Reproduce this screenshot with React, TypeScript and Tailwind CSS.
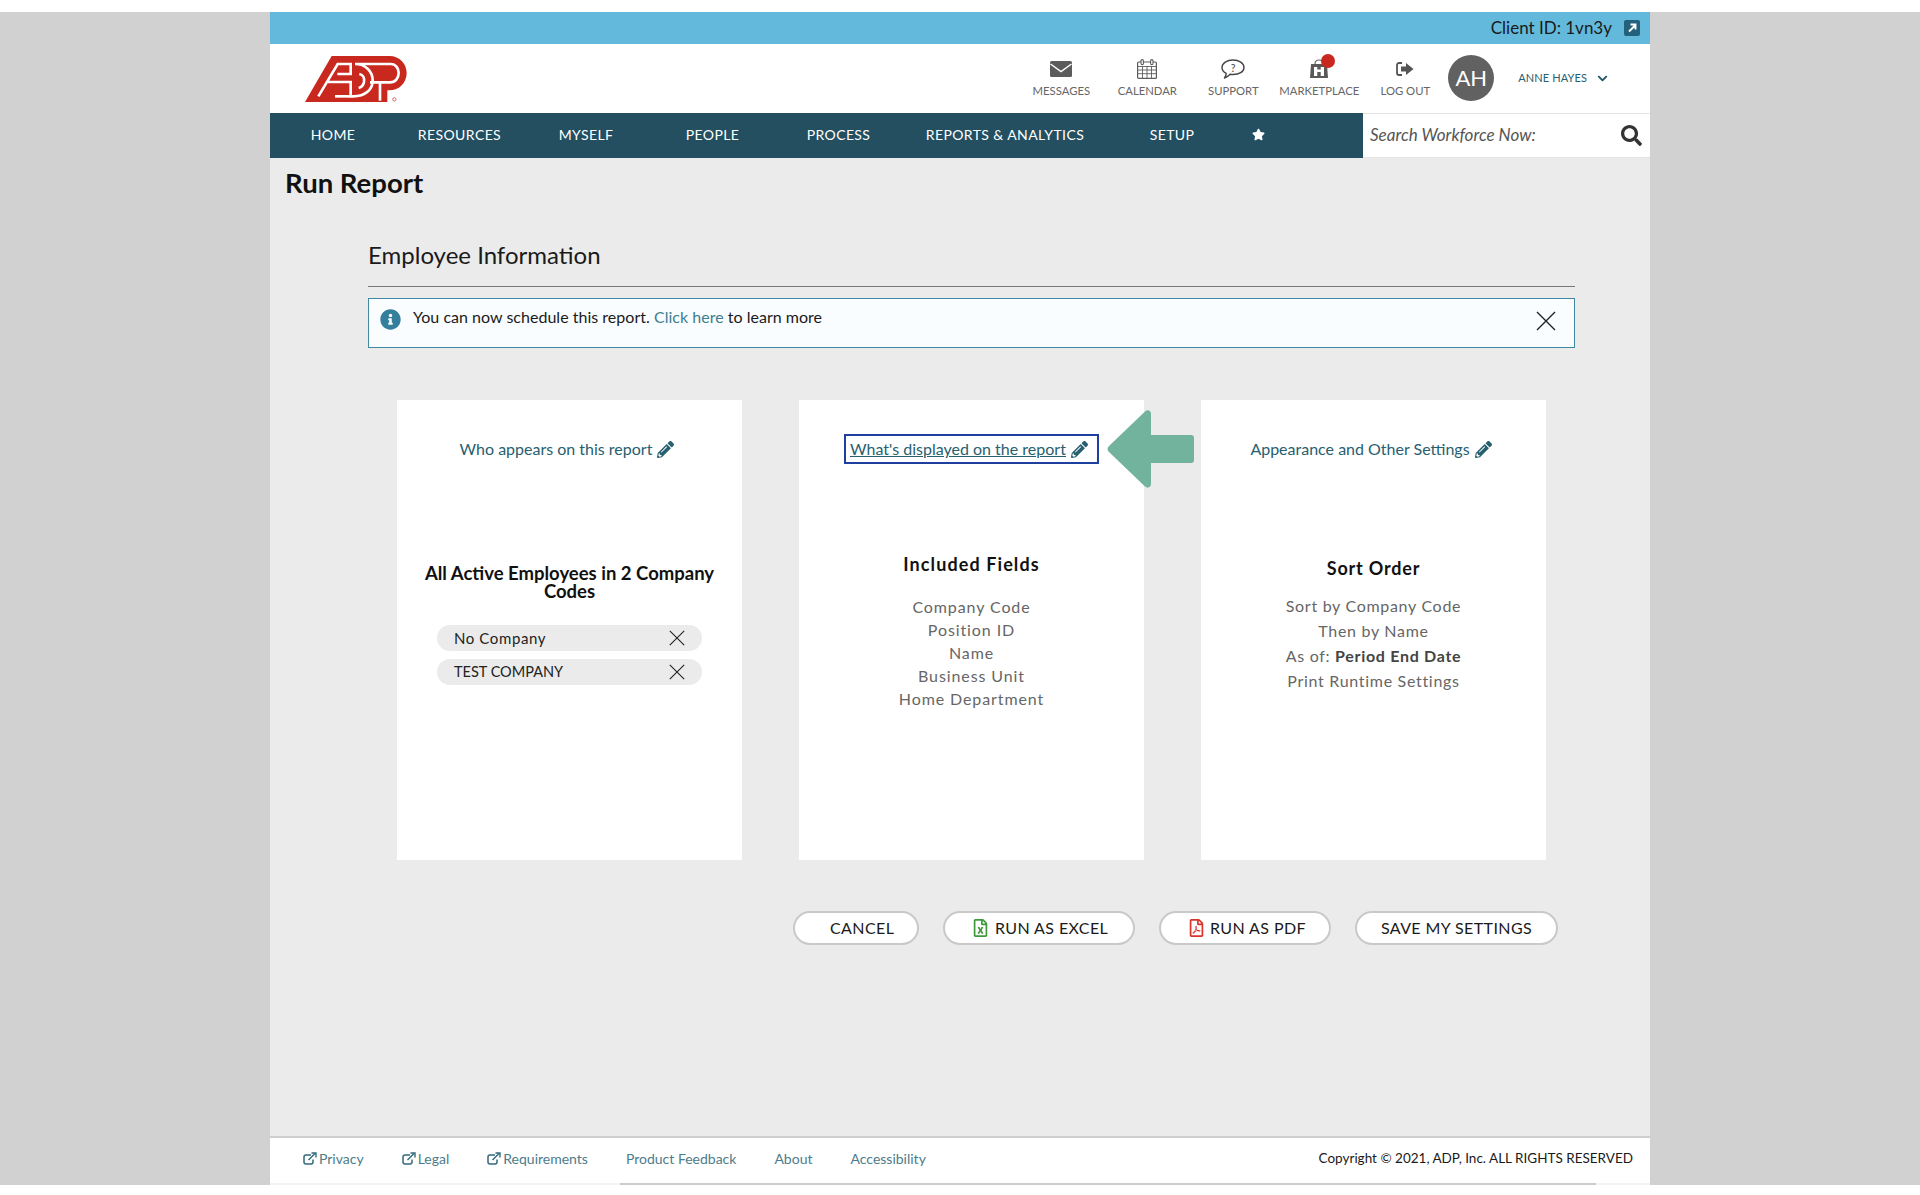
import { FaChevronDown, FaInfoCircle, FaPencilAlt, FaRegFileExcel, FaRegFilePdf, FaSearch, FaStar } from 'react-icons/fa'

const navItems = [
  { label: 'HOME', width: 'w-[126px]' },
  { label: 'RESOURCES', width: 'w-[127px]' },
  { label: 'MYSELF', width: 'w-[126px]' },
  { label: 'PEOPLE', width: 'w-[127px]' },
  { label: 'PROCESS', width: 'w-[125px]' },
  { label: 'REPORTS & ANALYTICS', width: 'w-[208px]' },
  { label: 'SETUP', width: 'w-[126px]' },
]

function AdpLogo() {
  return (
    <svg viewBox="0 0 330 162" className="w-[110px] h-[54px]" aria-label="ADP">
      <path
        d="M15 150 L95 12 H268 C300 12 320 36 320 63 C320 92 298 115 268 115 H262 V150 H225 L205 150 H60 Z"
        fill="#c8281e"
      />
      <g fill="none" stroke="#fff" strokeWidth="8">
        <path d="M55 133 L113 36 H152 V66 H112 M84 90 H152 V133 H160 C196 133 218 112 218 86 C218 58 196 36 165 36 H250 L272 36 C288 36 296 50 296 63 C296 78 286 91 270 91 H210" />
        <path d="M150 133 H105" />
        <path d="M240 91 V146" />
        <path d="M178 66 C190 68 194 78 192 90 C190 100 184 106 176 108" />
      </g>
      <circle cx="283" cy="142" r="5" fill="none" stroke="#c8281e" strokeWidth="2" />
    </svg>
  )
}

function MailIcon() {
  return (
    <svg viewBox="0 0 22 16" className="w-[22px] h-[16px]">
      <rect width="22" height="16" rx="1.5" fill="#5c5c5c" />
      <path d="M0.5 3 L11 10.5 L21.5 3" fill="none" stroke="#fff" strokeWidth="1.5" />
    </svg>
  )
}

function CalendarIcon() {
  return (
    <svg viewBox="0 0 20 20" className="w-[20px] h-[20px]" fill="none" stroke="#5c5c5c">
      <rect x="0.6" y="3" width="18.8" height="16.4" rx="1" strokeWidth="1.2" />
      <path d="M1 7.5 H19 M1 11 H19 M1 14.7 H19 M5.5 7 V19 M10 7 V19 M14.5 7 V19" strokeWidth="0.9" />
      <rect x="4" y="0.6" width="2.4" height="5" rx="1.2" fill="#fff" strokeWidth="1.1" />
      <rect x="13.6" y="0.6" width="2.4" height="5" rx="1.2" fill="#fff" strokeWidth="1.1" />
    </svg>
  )
}

function SupportIcon() {
  return (
    <svg viewBox="0 0 24 20" className="w-[24px] h-[20px]">
      <path
        d="M12 1 C18 1 23 4 23 8.5 C23 13 18 15.5 12 15.5 C11 15.5 10 15.4 9.2 15.3 C7.5 17 5.5 18.4 3.5 19 C4.6 17.6 5.2 15.9 5.2 14.3 C2.6 13 1 11 1 8.5 C1 4 6 1 12 1 Z"
        fill="none"
        stroke="#444"
        strokeWidth="1.4"
        strokeLinejoin="round"
      />
      <text x="12" y="12.5" textAnchor="middle" fontSize="10.5" fill="#444" fontFamily="Lato, sans-serif">
        ?
      </text>
    </svg>
  )
}

function MarketplaceIcon() {
  return (
    <span className="relative block w-[20px] h-[20px]">
      <svg viewBox="0 0 20 20" className="w-[20px] h-[20px]">
        <path d="M6 5 C6 2 8 1 10 1 C12 1 14 2 14 5" fill="none" stroke="#666" strokeWidth="1.2" />
        <path d="M2 5 H18 L19 19 H1 Z" fill="#595959" />
        <path d="M5 8 H8.3 V10.6 H11.7 V8 H15 V17 H11.7 V13 H8.3 V17 H5 Z" fill="#fff" />
      </svg>
      <span className="absolute top-[-5px] right-[-6px] w-[14px] h-[14px] rounded-full bg-[#c8281e]" />
    </span>
  )
}

function LogoutIcon() {
  return (
    <svg viewBox="0 0 18 14" className="w-[18px] h-[14px]">
      <path d="M6 1 H3 C1.8 1 1 1.8 1 3 V11 C1 12.2 1.8 13 3 13 H6" fill="none" stroke="#555" strokeWidth="1.8" />
      <path d="M5 4.5 H10 V1 L17.5 7 L10 13 V9.5 H5 Z" fill="#555" />
    </svg>
  )
}

function CloseIcon({ size }: { size: string }) {
  return (
    <svg viewBox="0 0 20 20" className={size} fill="none" stroke="#222" strokeWidth="1.4">
      <path d="M1 1 L19 19 M19 1 L1 19" />
    </svg>
  )
}

function ExternalIcon() {
  return (
    <svg viewBox="0 0 14 13" className="w-[14px] h-[13px] shrink-0" fill="none" stroke="#336a7c" strokeWidth="1.5">
      <path d="M8 3 H3 C1.8 3 1 3.8 1 5 V10 C1 11.2 1.8 12 3 12 H8 C9.2 12 10 11.2 10 10 V7.5" />
      <path d="M5.5 8 L12 1.5" />
      <path d="M8.5 1 H13 V5.5" strokeWidth="1.4" />
    </svg>
  )
}

function HeaderAction({ label, children }: { label: string; children: React.ReactNode }) {
  return (
    <div className="w-[86px] flex flex-col items-center">
      <div className="h-[22px] pb-[2px] flex items-center justify-center">{children}</div>
      <span className="mt-[3px] text-[11.3px] leading-[14px] text-[#666] whitespace-nowrap">{label}</span>
    </div>
  )
}

function EditLink({ label }: { label: string }) {
  return (
    <a className="mr-[5px] flex items-center gap-[5px] text-[16px] leading-[20px] text-[#27606f] whitespace-nowrap">
      {label}
      <FaPencilAlt className="w-[17px] h-[17px] text-[#27606f]" />
    </a>
  )
}

function Chip({ label, text }: { label: string; text: string }) {
  return (
    <div className={`w-[265px] h-[26px] pl-[17px] pr-[17px] rounded-full bg-[#ebebeb] flex items-center justify-between text-[#222] ${text}`}>
      {label}
      <CloseIcon size="w-[16px] h-[16px]" />
    </div>
  )
}

function Card({ children }: { children: React.ReactNode }) {
  return <div className="w-[345px] h-[460px] bg-white flex flex-col items-center pt-[34px] text-center">{children}</div>
}

function Pill({ children, className }: { children: React.ReactNode; className: string }) {
  return (
    <button
      className={`h-[34px] rounded-full bg-white border-2 border-[#c9c9c9] flex items-center text-[16px] tracking-[0.4px] text-[#1a1a1a] whitespace-nowrap ${className}`}
    >
      {children}
    </button>
  )
}

export default function App() {
  return (
    <div className="h-[1195px] bg-white pt-[12px] pb-[10px] [font-family:Lato,sans-serif]">
      <div className="h-full bg-[#d1d1d1] flex justify-center">
        <div className="w-[1380px] bg-[#ebebeb] flex flex-col">
          {/* Client bar */}
          <div className="h-[32px] bg-[#63b9db] flex items-center justify-end pr-[10px] gap-[12px] shrink-0">
            <span className="pb-[1px] text-[17px] text-[#1a1a1a]">Client ID: 1vn3y</span>
            <svg viewBox="0 0 16 16" className="w-[16px] h-[16px]">
              <rect width="16" height="16" rx="2" fill="#24617c" />
              <path d="M5 11.5 L11 5.5 M6.5 4.5 H11.5 V9.5" fill="none" stroke="#fff" strokeWidth="1.9" />
            </svg>
          </div>

          {/* Header */}
          <header className="h-[69px] bg-white flex items-center pl-[30px] shrink-0">
            <AdpLogo />
            <div className="ml-auto flex items-center">
              <HeaderAction label="MESSAGES">
                <MailIcon />
              </HeaderAction>
              <HeaderAction label="CALENDAR">
                <CalendarIcon />
              </HeaderAction>
              <HeaderAction label="SUPPORT">
                <SupportIcon />
              </HeaderAction>
              <HeaderAction label="MARKETPLACE">
                <MarketplaceIcon />
              </HeaderAction>
              <HeaderAction label="LOG OUT">
                <LogoutIcon />
              </HeaderAction>
            </div>
            <div className="mb-[2px] w-[46px] h-[46px] rounded-full bg-[#616161] flex items-center justify-center text-[22px] text-white">
              AH
            </div>
            <span className="ml-[24px] text-[11px] tracking-[0.1px] text-[#27606f] whitespace-nowrap">ANNE HAYES</span>
            <FaChevronDown className="ml-[10px] mr-[42px] w-[11px] h-[11px] text-[#1f5568]" />
          </header>

          {/* Nav */}
          <div className="h-[45px] flex shrink-0">
            <nav className="w-[1093px] pb-[2px] bg-[#234f61] flex items-center text-white text-[14px] tracking-[0.4px]">
              {navItems.map((item) => (
                <span key={item.label} className={`${item.width} text-center whitespace-nowrap`}>
                  {item.label}
                </span>
              ))}
              <span className="w-[46px] flex justify-center">
                <FaStar className="w-[13px] h-[13px]" />
              </span>
            </nav>
            <div className="flex-1 bg-white border-y border-[#e4e4e4] flex items-center justify-between pl-[7px] pr-[8px]">
              <span className="pb-[2px] italic text-[17px] text-[#555]">Search Workforce Now:</span>
              <FaSearch className="w-[21px] h-[21px] text-[#333]" />
            </div>
          </div>

          {/* Page body */}
          <main className="flex-1 flex flex-col">
            <h1 className="mt-[8px] ml-[15px] text-[27.5px] leading-[34px] font-bold text-[#111]">Run Report</h1>

            <div className="mt-[40px] ml-[98px] mr-[75px] flex flex-col">
              <h2 className="text-[24px] leading-[30px] text-[#1a1a1a]">Employee Information</h2>
              <div className="mt-[16px] border-t border-[#777]" />
              <div className="mt-[11px] h-[50px] bg-[#f9fdff] border border-[#4188a0] flex pl-[11px] pr-[18px] pt-[10px]">
                <FaInfoCircle className="w-[21px] h-[21px] text-[#347f9c]" />
                <p className="-mt-[2px] ml-[12px] text-[16px] leading-[20px] tracking-[0.02px] text-[#1a1a1a]">
                  You can now schedule this report. <span className="text-[#3f7d90]">Click here</span> to learn more
                </p>
                <span className="ml-auto mt-[2px]">
                  <CloseIcon size="w-[20px] h-[20px]" />
                </span>
              </div>

              {/* Cards */}
              <div className="relative mt-[52px] ml-[29px] flex gap-[57px]">
                <Card>
                  <div className="h-[30px] flex items-center">
                    <EditLink label="Who appears on this report" />
                  </div>
                  <h3 className="mt-[100px] px-[20px] text-[18.5px] leading-[18px] font-bold text-[#111]">
                    All Active Employees in 2 Company Codes
                  </h3>
                  <div className="mt-[25px] flex flex-col gap-[8px]">
                    <Chip label="No Company" text="text-[15px] tracking-[0.6px]" />
                    <Chip label="TEST COMPANY" text="text-[14.5px]" />
                  </div>
                </Card>

                <Card>
                  <div className="h-[30px] w-[255px] border-2 border-[#1f3f9f] flex items-center justify-center underline">
                    <EditLink label="What's displayed on the report" />
                  </div>
                  <h3 className="mt-[90px] text-[18px] leading-[20px] font-bold tracking-[1.1px] text-[#111]">Included Fields</h3>
                  <ul className="mt-[21px] text-[16px] leading-[23px] tracking-[0.9px] text-[#666]">
                    <li>Company Code</li>
                    <li>Position ID</li>
                    <li>Name</li>
                    <li>Business Unit</li>
                    <li>Home Department</li>
                  </ul>
                </Card>

                <Card>
                  <div className="h-[30px] flex items-center">
                    <EditLink label="Appearance and Other Settings" />
                  </div>
                  <h3 className="mt-[94px] text-[18px] leading-[20px] font-bold tracking-[0.8px] text-[#111]">Sort Order</h3>
                  <ul className="mt-[15px] text-[16px] leading-[25px] tracking-[0.7px] text-[#666]">
                    <li>Sort by Company Code</li>
                    <li>Then by Name</li>
                    <li>
                      As of: <span className="font-bold text-[#444]">Period End Date</span>
                    </li>
                    <li>Print Runtime Settings</li>
                  </ul>
                </Card>

                {/* Callout arrow over the middle card */}
                <svg viewBox="0 0 87 78" className="absolute left-[710px] top-[10px] w-[87px] h-[78px]">
                  <path
                    d="M2 36 L38 1.5 C41 -1 44 1 44 4 V25 H84 C86 25 87 26 87 28 V50 C87 52 86 53 84 53 H44 V74 C44 77 41 79 38 76.5 L2 42 C0 40 0 38 2 36 Z"
                    fill="#72b39e"
                  />
                </svg>
              </div>

              {/* Actions */}
              <div className="mt-[51px] mr-[17px] flex justify-end gap-[24px]">
                <Pill className="w-[126px] pl-[35px]">CANCEL</Pill>
                <Pill className="w-[192px] pl-[28px] gap-[7px]">
                  <FaRegFileExcel className="w-[15px] h-[18px] text-[#3f9a3b]" />
                  RUN AS EXCEL
                </Pill>
                <Pill className="w-[172px] pl-[28px] gap-[6px]">
                  <FaRegFilePdf className="w-[15px] h-[18px] text-[#d9342b]" />
                  RUN AS PDF
                </Pill>
                <Pill className="w-[203px] justify-center">SAVE MY SETTINGS</Pill>
              </div>
            </div>
          </main>

          {/* Footer */}
          <footer className="shrink-0 bg-white border-t-2 border-[#cfcfcf]">
            <div className="h-[45px] pb-[4px] flex items-center pl-[33px] pr-[17px] text-[14px] text-[#4d7c8a]">
              <div className="flex items-center gap-[38px]">
                <a className="flex items-center gap-[2px]">
                  <ExternalIcon />
                  Privacy
                </a>
                <a className="flex items-center gap-[2px]">
                  <ExternalIcon />
                  Legal
                </a>
                <a className="flex items-center gap-[2px]">
                  <ExternalIcon />
                  Requirements
                </a>
                <a>Product Feedback</a>
                <a>About</a>
                <a>Accessibility</a>
              </div>
              <span className="ml-auto text-[13.5px] text-[#1a1a1a]">Copyright © 2021, ADP, Inc. ALL RIGHTS RESERVED</span>
            </div>
            <div className="h-[2px] flex">
              <div className="w-[350px] bg-[#f3f3f3]" />
              <div className="flex-1 bg-[#cccccc]" />
              <div className="w-[54px] bg-[#f3f3f3]" />
            </div>
          </footer>
        </div>
      </div>
    </div>
  )
}
